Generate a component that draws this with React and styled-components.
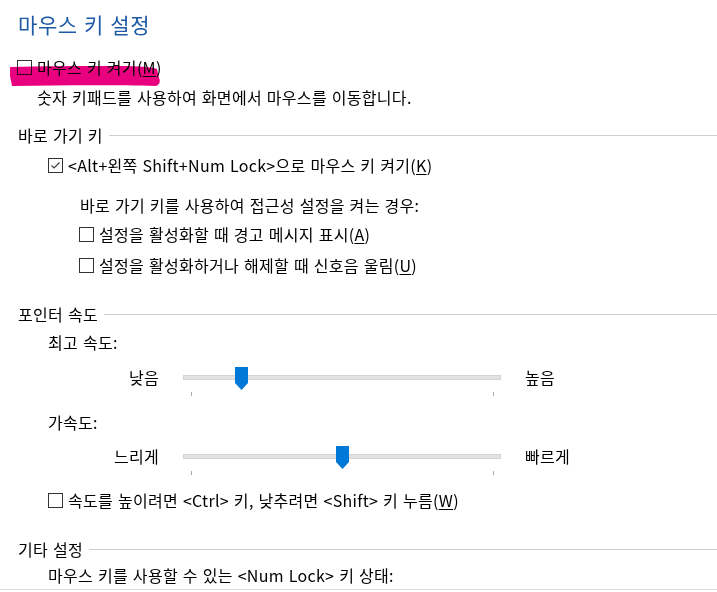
import styled, { createGlobalStyle } from 'styled-components'

const GlobalStyle = createGlobalStyle`
  html, body {
    margin: 0;
    background: #fff;
  }
`

const Page = styled.div`
  position: relative;
  box-sizing: border-box;
  height: 590px;
  overflow: hidden;
  padding-left: 17px;
  border-bottom: 1px solid #dcdcdc;
  font-family: "Noto Sans CJK KR", "Noto Sans", sans-serif;
  font-size: 16px;
  letter-spacing: 0.3px;
  word-spacing: 1px;
  color: #000;
  u {
    text-underline-offset: 2px;
  }
`

const Title = styled.h1`
  margin: 0 0 0 1px;
  height: 48px;
  line-height: 48px;
  font-size: 21px;
  font-weight: 400;
  letter-spacing: 0.6px;
  word-spacing: 1px;
  color: #1f5aa6;
`

const Row = styled.div`
  position: relative;
  display: flex;
  align-items: center;
  height: ${p => p.$h || 30}px;
  margin-top: ${p => p.$mt || 0}px;
  margin-left: ${p => p.$indent || 0}px;
  white-space: nowrap;
`

const SectionHeader = styled.div`
  display: flex;
  align-items: center;
  height: 28px;
  margin-top: ${p => p.$mt || 0}px;
  padding-left: 1px;
  &::after {
    content: '';
    flex: 1;
    height: 1px;
    margin-left: 6px;
    background: #cfcfcf;
  }
`

const Box = styled.span`
  display: inline-flex;
  flex-shrink: 0;
  box-sizing: border-box;
  width: 15px;
  height: 15px;
  margin-right: 5px;
  border: 1px solid #333;
  background: #fff;
  svg {
    display: block;
  }
`

const Marker = styled.svg`
  position: absolute;
  left: -8px;
  top: 11px;
  mix-blend-mode: multiply;
  pointer-events: none;
`

const SliderRow = styled.div`
  display: grid;
  grid-template-columns: 142px 318px auto;
  column-gap: 24px;
  margin-top: ${p => p.$mt || 0}px;
`

const SliderLabel = styled.span`
  height: 20px;
  line-height: 20px;
  text-align: ${p => (p.$end ? 'left' : 'right')};
`

const TrackArea = styled.div`
  position: relative;
  height: 24px;
`

const Track = styled.div`
  box-sizing: border-box;
  margin-top: 8px;
  height: 5px;
  background: #e3e3e3;
  border: 1px solid #d2d2d2;
`

const Thumb = styled.svg`
  position: absolute;
  top: 0;
`

const Ticks = styled.div`
  display: flex;
  justify-content: space-between;
  width: 318px;
  box-sizing: border-box;
  margin: 1px 0 0 166px;
  padding: 0 7px 0 8px;
  span {
    width: 1px;
    height: 4px;
    background: #a8a8a8;
  }
`

function Checkbox({ checked }) {
  return (
    <Box>
      {checked && (
        <svg width="13" height="13" viewBox="0 0 13 13">
          <polyline points="2.5,6.5 5,9 10.5,3.5" fill="none" stroke="#3a3a3a" strokeWidth="1.1" />
        </svg>
      )}
    </Box>
  )
}

function Slider({ label, endLabel, value, mt }) {
  const left = 8 + value * 302 - 6.5
  return (
    <>
      <SliderRow $mt={mt}>
        <SliderLabel>{label}</SliderLabel>
        <TrackArea>
          <Track />
          <Thumb width="13" height="23" viewBox="0 0 13 23" style={{ left }}>
            <path d="M0 0H13V16L6.5 23L0 16Z" fill="#0078d7" />
          </Thumb>
        </TrackArea>
        <SliderLabel $end>{endLabel}</SliderLabel>
      </SliderRow>
      <Ticks>
        <span />
        <span />
      </Ticks>
    </>
  )
}

export default function App() {
  return (
    <Page>
      <GlobalStyle />
      <Title>마우스 키 설정</Title>
      <Row $mt={4}>
        <Checkbox />
        <span>마우스 키 켜기(<u>M</u>)</span>
        <Marker width="160" height="28" viewBox="0 0 160 28">
          <path
            d="M1 4 C30 3 70 3 110 3 C130 3 143 4 148 6 L150 15 C152 19 150 22 147 23 C110 22 60 22 3 23 L1 13 Z"
            fill="#e8007f"
          />
        </Marker>
      </Row>
      <Row $indent={20}>숫자 키패드를 사용하여 화면에서 마우스를 이동합니다.</Row>

      <SectionHeader $mt={9}>바로 가기 키</SectionHeader>
      <Row $mt={1} $indent={31}>
        <Checkbox checked />
        <span>&lt;Alt+왼쪽 Shift+Num Lock&gt;으로 마우스 키 켜기(<u>K</u>)</span>
      </Row>
      <Row $mt={10} $h={29} $indent={63}>바로 가기 키를 사용하여 접근성 설정을 켜는 경우:</Row>
      <Row $indent={62}>
        <Checkbox />
        <span>설정을 활성화할 때 경고 메시지 표시(<u>A</u>)</span>
      </Row>
      <Row $mt={1} $indent={62}>
        <Checkbox />
        <span>설정을 활성화하거나 해제할 때 신호음 울림(<u>U</u>)</span>
      </Row>

      <SectionHeader $mt={20}>포인터 속도</SectionHeader>
      <Row $h={28} $indent={31}>최고 속도:</Row>
      <Slider label="낮음" endLabel="높음" value={0.167} mt={11} />
      <Row $mt={11} $indent={31}>가속도:</Row>
      <Slider label="느리게" endLabel="빠르게" value={0.5} mt={9} />
      <Row $mt={10} $indent={31}>
        <Checkbox />
        <span>속도를 높이려면 &lt;Ctrl&gt; 키, 낮추려면 &lt;Shift&gt; 키 누름(<u>W</u>)</span>
      </Row>

      <SectionHeader $mt={20}>기타 설정</SectionHeader>
      <Row $h={24} $indent={31}>마우스 키를 사용할 수 있는 &lt;Num Lock&gt; 키 상태:</Row>
    </Page>
  )
}
